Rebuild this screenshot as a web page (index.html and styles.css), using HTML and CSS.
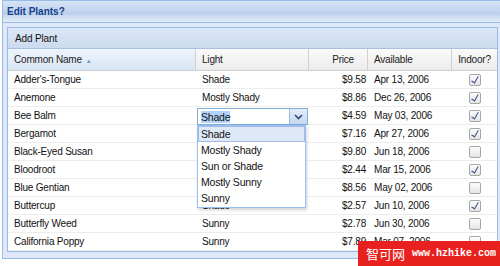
FILE: index.html
```html
<!DOCTYPE html>
<html>
<head>
<meta charset="utf-8">
<link rel="stylesheet" href="styles.css">
</head>
<body>
<div class="win">
  <div class="win-title">Edit Plants?</div>
  <div class="win-body">
    <div class="panel">
      <div class="tbar"><span class="tbtn">Add Plant</span></div>
      <div class="grid">
        <div class="row hrow">
          <div class="hc sorted">Common Name <span class="sort">&#9650;</span></div>
          <div class="hc">Light</div>
          <div class="hc num">Price</div>
          <div class="hc">Available</div>
          <div class="hc ctr">Indoor?</div>
        </div>
        <div class="row"><div class="c">Adder's-Tongue</div><div class="c">Shade</div><div class="c num">$9.58</div><div class="c">Apr 13, 2006</div><div class="c ctr"><span class="cb on"></span></div></div>
        <div class="row"><div class="c">Anemone</div><div class="c">Mostly Shady</div><div class="c num">$8.86</div><div class="c">Dec 26, 2006</div><div class="c ctr"><span class="cb on"></span></div></div>
        <div class="row"><div class="c">Bee Balm</div><div class="c"></div><div class="c num">$4.59</div><div class="c">May 03, 2006</div><div class="c ctr"><span class="cb on"></span></div></div>
        <div class="row"><div class="c">Bergamot</div><div class="c"></div><div class="c num">$7.16</div><div class="c">Apr 27, 2006</div><div class="c ctr"><span class="cb on"></span></div></div>
        <div class="row"><div class="c">Black-Eyed Susan</div><div class="c"></div><div class="c num">$9.80</div><div class="c">Jun 18, 2006</div><div class="c ctr"><span class="cb"></span></div></div>
        <div class="row"><div class="c">Bloodroot</div><div class="c"></div><div class="c num">$2.44</div><div class="c">Mar 15, 2006</div><div class="c ctr"><span class="cb on"></span></div></div>
        <div class="row"><div class="c">Blue Gentian</div><div class="c"></div><div class="c num">$8.56</div><div class="c">May 02, 2006</div><div class="c ctr"><span class="cb"></span></div></div>
        <div class="row"><div class="c">Buttercup</div><div class="c">Shade</div><div class="c num">$2.57</div><div class="c">Jun 10, 2006</div><div class="c ctr"><span class="cb on"></span></div></div>
        <div class="row"><div class="c">Butterfly Weed</div><div class="c">Sunny</div><div class="c num">$2.78</div><div class="c">Jun 30, 2006</div><div class="c ctr"><span class="cb"></span></div></div>
        <div class="row"><div class="c">California Poppy</div><div class="c">Sunny</div><div class="c num">$7.89</div><div class="c">Mar 07, 2006</div><div class="c ctr"><span class="cb"></span></div></div>
      </div>
    </div>
  </div>
</div>

<div class="combo">
  <span class="combo-text"><span class="sel">Shade</span></span>
  <span class="trigger"><svg width="9" height="6" viewBox="0 0 9 6"><path d="M1 1 L4.5 4.5 L8 1" fill="none" stroke="#2c4a78" stroke-width="1.6"/></svg></span>
</div>
<div class="list">
  <div class="item hot">Shade</div>
  <div class="item">Mostly Shady</div>
  <div class="item">Sun or Shade</div>
  <div class="item">Mostly Sunny</div>
  <div class="item">Sunny</div>
</div>

<div class="watermark"><span class="wm-cn">智可网</span><span class="wm-url">www.hzhike.com</span></div>
</body>
</html>
```

FILE: styles.css
```css
html, body {
  margin: 0;
  padding: 0;
  width: 500px;
  height: 266px;
  overflow: hidden;
  background: #ffffff;
  font-family: "Liberation Sans", Arial, sans-serif;
  font-size: 10px;
  color: #111;
}

.win {
  margin-left: 2px;
  width: 510px;
  border: 1px solid #99bbe8;
  background: #dfe8f6;
}

.win-title {
  height: 21px;
  line-height: 22px;
  padding-left: 4px;
  font-weight: bold;
  color: #15428b;
  background: linear-gradient(#d6e3f5 0%, #bcd0ec 60%, #d3e1f3 80%, #e3ecf8 100%);
  border-bottom: 1px solid #99bbe8;
}

.win-body {
  padding: 4px 4px 6px 4px;
}

.panel {
  width: 491px;
  box-sizing: border-box;
  border: 1px solid #99bbe8;
  background: #ffffff;
}

.tbar {
  height: 20px;
  background: linear-gradient(#dce8f6, #cbdaee);
  border-bottom: 1px solid #a9c0e0;
  display: flex;
  align-items: center;
  padding-left: 7px;
  letter-spacing: -0.15px;
}

.grid {
  display: flex;
  flex-direction: column;
}

.row {
  display: grid;
  grid-template-columns: 188px 113px 59px 84px 45px;
  height: 17px;
  border-bottom: 1px solid #ededed;
  align-items: center;
  letter-spacing: -0.2px;
}

.hrow {
  height: 21px;
  border-bottom: 1px solid #d0d0d0;
  background: linear-gradient(#fafafa, #ececec);
  align-items: stretch;
}

.hc {
  display: flex;
  align-items: center;
  padding-left: 6px;
  border-right: 1px solid #d0d0d0;
  color: #222;
}

.hc.sorted {
  background: linear-gradient(#eef4fc, #d9e5f4);
}

.hc.num {
  justify-content: flex-end;
  padding-right: 13px;
}

.hc.ctr {
  justify-content: center;
  padding-left: 0;
  border-right: none;
}

.sort {
  font-size: 6px;
  color: #7496c8;
  margin-left: 4px;
  position: relative;
  top: 1px;
}

.c {
  padding-left: 6px;
  white-space: nowrap;
  overflow: hidden;
}

.c.num {
  text-align: right;
  padding-right: 2px;
}

.c.ctr {
  display: flex;
  justify-content: center;
  padding-left: 0;
}

.cb {
  display: inline-block;
  box-sizing: border-box;
  width: 12px;
  height: 12px;
  border: 1px solid #a8a8a8;
  border-radius: 2px;
  background: linear-gradient(#fdfdfd, #e4e4e4);
  position: relative;
}

.cb.on::after {
  content: "";
  position: absolute;
  left: 3px;
  top: 0px;
  width: 3px;
  height: 7px;
  border-right: 1.5px solid #3b4d8c;
  border-bottom: 1px solid #3b4d8c;
  transform: rotate(30deg);
}

.combo {
  position: absolute;
  left: 197px;
  top: 108px;
  width: 111px;
  height: 17px;
  box-sizing: border-box;
  border: 1px solid #7eadd9;
  background: #fff;
  display: flex;
  align-items: center;
}

.combo-text {
  flex: 1;
  padding-left: 3px;
  letter-spacing: -0.2px;
  font-size: 10.5px;
}

.sel {
  background: #b4d3f9;
}

.trigger {
  width: 17px;
  height: 15px;
  border-left: 1px solid #9bbbe0;
  background: linear-gradient(#e5eefa, #c4d6ef);
  display: flex;
  align-items: center;
  justify-content: center;
}

.list {
  position: absolute;
  left: 197px;
  top: 125px;
  width: 109px;
  box-sizing: border-box;
  border: 1px solid #98c0f4;
  background: #fff;
  box-shadow: 1px 2px 3px rgba(0, 0, 0, 0.18);
  padding-bottom: 1px;
}

.item {
  height: 16px;
  line-height: 16px;
  padding-left: 3px;
  box-sizing: border-box;
  letter-spacing: -0.2px;
  font-size: 10.5px;
}

.item.hot {
  background: #dfe8f6;
  border: 1px solid #a3bae9;
  line-height: 14px;
  padding-left: 2px;
}

.watermark {
  position: absolute;
  left: 358px;
  top: 241px;
  width: 142px;
  height: 25px;
  background: #e8211e;
  color: #fff;
  display: flex;
  align-items: center;
  padding-left: 8px;
  box-sizing: border-box;
}

.wm-cn {
  font-family: "Noto Sans CJK SC", sans-serif;
  font-size: 13px;
  margin-right: 7px;
}

.wm-url {
  font-family: "Liberation Mono", monospace;
  font-size: 10px;
  font-weight: bold;
}
```
